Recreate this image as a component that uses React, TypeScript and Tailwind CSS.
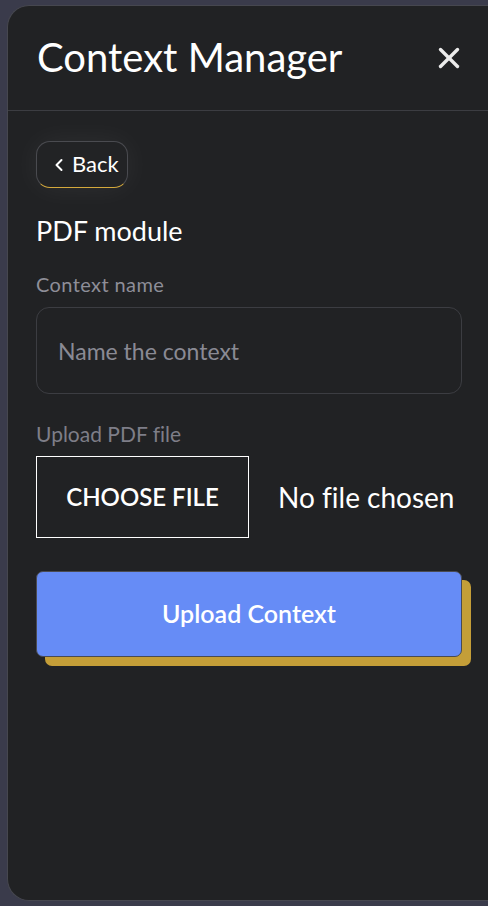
import React from 'react';
import { X, ChevronLeft } from 'lucide-react';

const font = { fontFamily: 'Lato, "Noto Sans", sans-serif' };

export default function App() {
  return (
    <div className="w-[488px] h-[906px] bg-[#3a3b4b] pt-[5px] pb-[5px] pl-[7px] overflow-hidden [font-variant-ligatures:none]" style={font}>
      <div className="h-full bg-[#212224] rounded-l-[22px] border-l border-t border-b border-[#46474f] flex flex-col">
        <div className="h-[105px] flex items-center justify-between pl-[29px] pr-[22px] border-b border-[#3c3d42] shrink-0">
          <h1 className="text-[40px] text-white font-normal leading-none pb-[2px]">Context Manager</h1>
          <X size={34} strokeWidth={2.4} className="text-[#ececec]" />
        </div>

        <div className="pl-[28px] pr-[26px] pt-[30px] flex flex-col">
          <button className="self-start h-[47px] pl-[12px] pr-[8px] flex items-center gap-[3px] rounded-[14px] border border-[#4a4b50] border-b-[#d4a93c] text-white text-[22px] shadow-[0_0_30px_rgba(255,255,255,0.06)] bg-[#222325]">
            <ChevronLeft size={20} strokeWidth={2.4} />
            <span className="leading-none pb-[1px]">Back</span>
          </button>

          <h2 className="mt-[29px] text-[27px] text-white leading-none">PDF module</h2>

          <label className="mt-[30px] text-[20px] tracking-[0.4px] text-[#8e8e98] leading-none">Context name</label>
          <input
            type="text"
            placeholder="Name the context"
            className="mt-[13px] h-[87px] w-full rounded-[13px] border border-[#3c3d42] bg-transparent px-[21px] text-[23px] text-white placeholder:text-[#8a8a94] outline-none"
            style={font}
          />

          <label className="mt-[29px] text-[21px] text-[#7e7e88] leading-none">Upload PDF file</label>
          <div className="mt-[12px] flex items-center gap-[29px]">
            <div className="w-[213px] h-[82px] border border-white flex items-center justify-center text-white text-[24px] font-semibold">
              CHOOSE FILE
            </div>
            <span className="text-white text-[28px]">No file chosen</span>
          </div>

          <button className="mt-[33px] w-full h-[86px] rounded-[7px] bg-[#668cf6] border border-[#4a4b52] text-white text-[25px] font-semibold shadow-[9px_9px_0_#c49e38]">
            Upload Context
          </button>
        </div>
      </div>
    </div>
  );
}
